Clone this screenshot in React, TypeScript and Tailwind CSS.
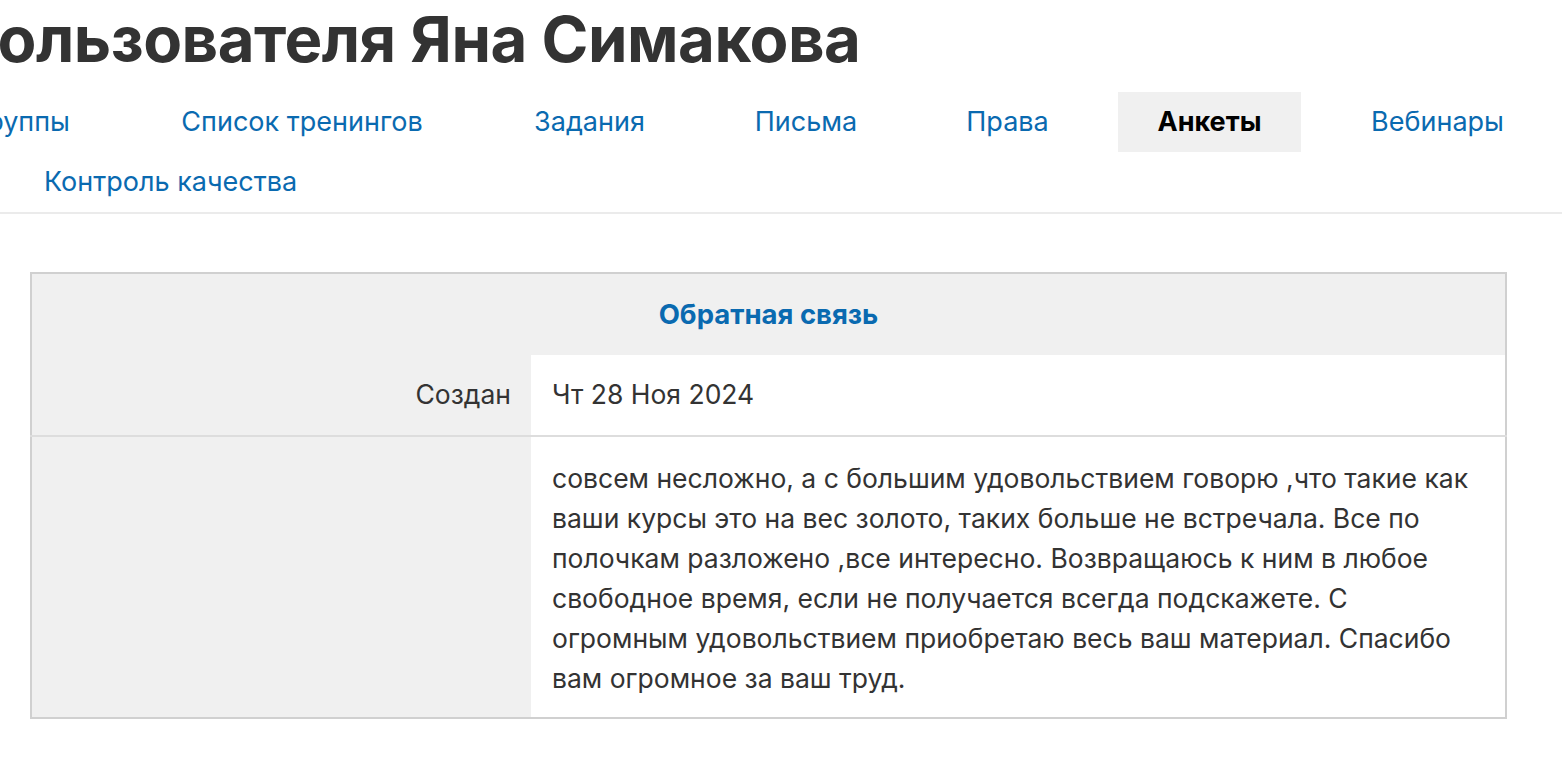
const tabs = [
  { label: "Группы", w: "w-[200px]" },
  { label: "Список тренингов", w: "w-[324px]" },
  { label: "Задания", w: "w-[193px]" },
  { label: "Письма", w: "w-[182px]" },
  { label: "Права", w: "w-[163px]" },
  { label: "Анкеты", w: "w-[183px]", active: true },
  { label: "Вебинары", w: "w-[215px]" },
];

const answer =
  "совсем несложно, а с большим удовольствием говорю ,что такие как ваши курсы это на вес золото, таких больше не встречала. Все по полочкам разложено ,все интересно. Возвращаюсь к ним в любое свободное время, если не получается всегда подскажете. С огромным удовольствием приобретаю весь ваш материал. Спасибо вам огромное за ваш труд.";

export default function App() {
  return (
    <div className="min-h-screen overflow-hidden bg-white font-['Inter',sans-serif] text-[#333]">
      <h1 className="-ml-[41px] whitespace-nowrap pt-[4px] text-[63.5px] font-bold leading-[70px] tracking-[-0.5px] text-[#333]">
        пользователя Яна Симакова
      </h1>

      <nav className="mt-[18px] border-b-2 border-[#ebebeb]">
        <ul className="-ml-[89px] flex gap-[29px] whitespace-nowrap">
          {tabs.map(({ label, w, active }) => (
            <li
              key={label}
              className={`${w} flex h-[60px] shrink-0 items-center ${label === "Группы" ? "justify-end pr-[41px]" : "justify-center"} text-[27px] ${
                active ? "bg-[#f0f0f0] font-bold text-black" : "text-[#0a6ab0]"
              }`}
            >
              {label}
            </li>
          ))}
        </ul>
        <ul className="flex pl-[3px]">
          <li className="flex h-[60px] items-center px-[41px] text-[27px] text-[#0a6ab0]">
            Контроль качества
          </li>
        </ul>
      </nav>

      <section className="px-[30px] pt-[58px]">
        <table className="w-[1477px] border-collapse border-2 border-[#d0d0d0] text-[26.5px]">
          <thead>
            <tr className="bg-[#f0f0f0]">
              <th colSpan={2} className="h-[82px] text-center text-[27.5px] font-bold text-[#0a6ab0]">
                Обратная связь
              </th>
            </tr>
          </thead>
          <tbody>
            <tr className="border-b-2 border-[#dddddd]">
              <td className="h-[81px] w-[500px] bg-[#f0f0f0] pr-[20px] text-right align-middle">
                Создан
              </td>
              <td className="bg-white px-[21px] align-middle">Чт 28 Ноя 2024</td>
            </tr>
            <tr>
              <td className="bg-[#f0f0f0]" />
              <td className="bg-white px-[21px] pb-[19px] pt-[21px] leading-[40px]">
                {answer}
              </td>
            </tr>
          </tbody>
        </table>
      </section>
    </div>
  );
}
